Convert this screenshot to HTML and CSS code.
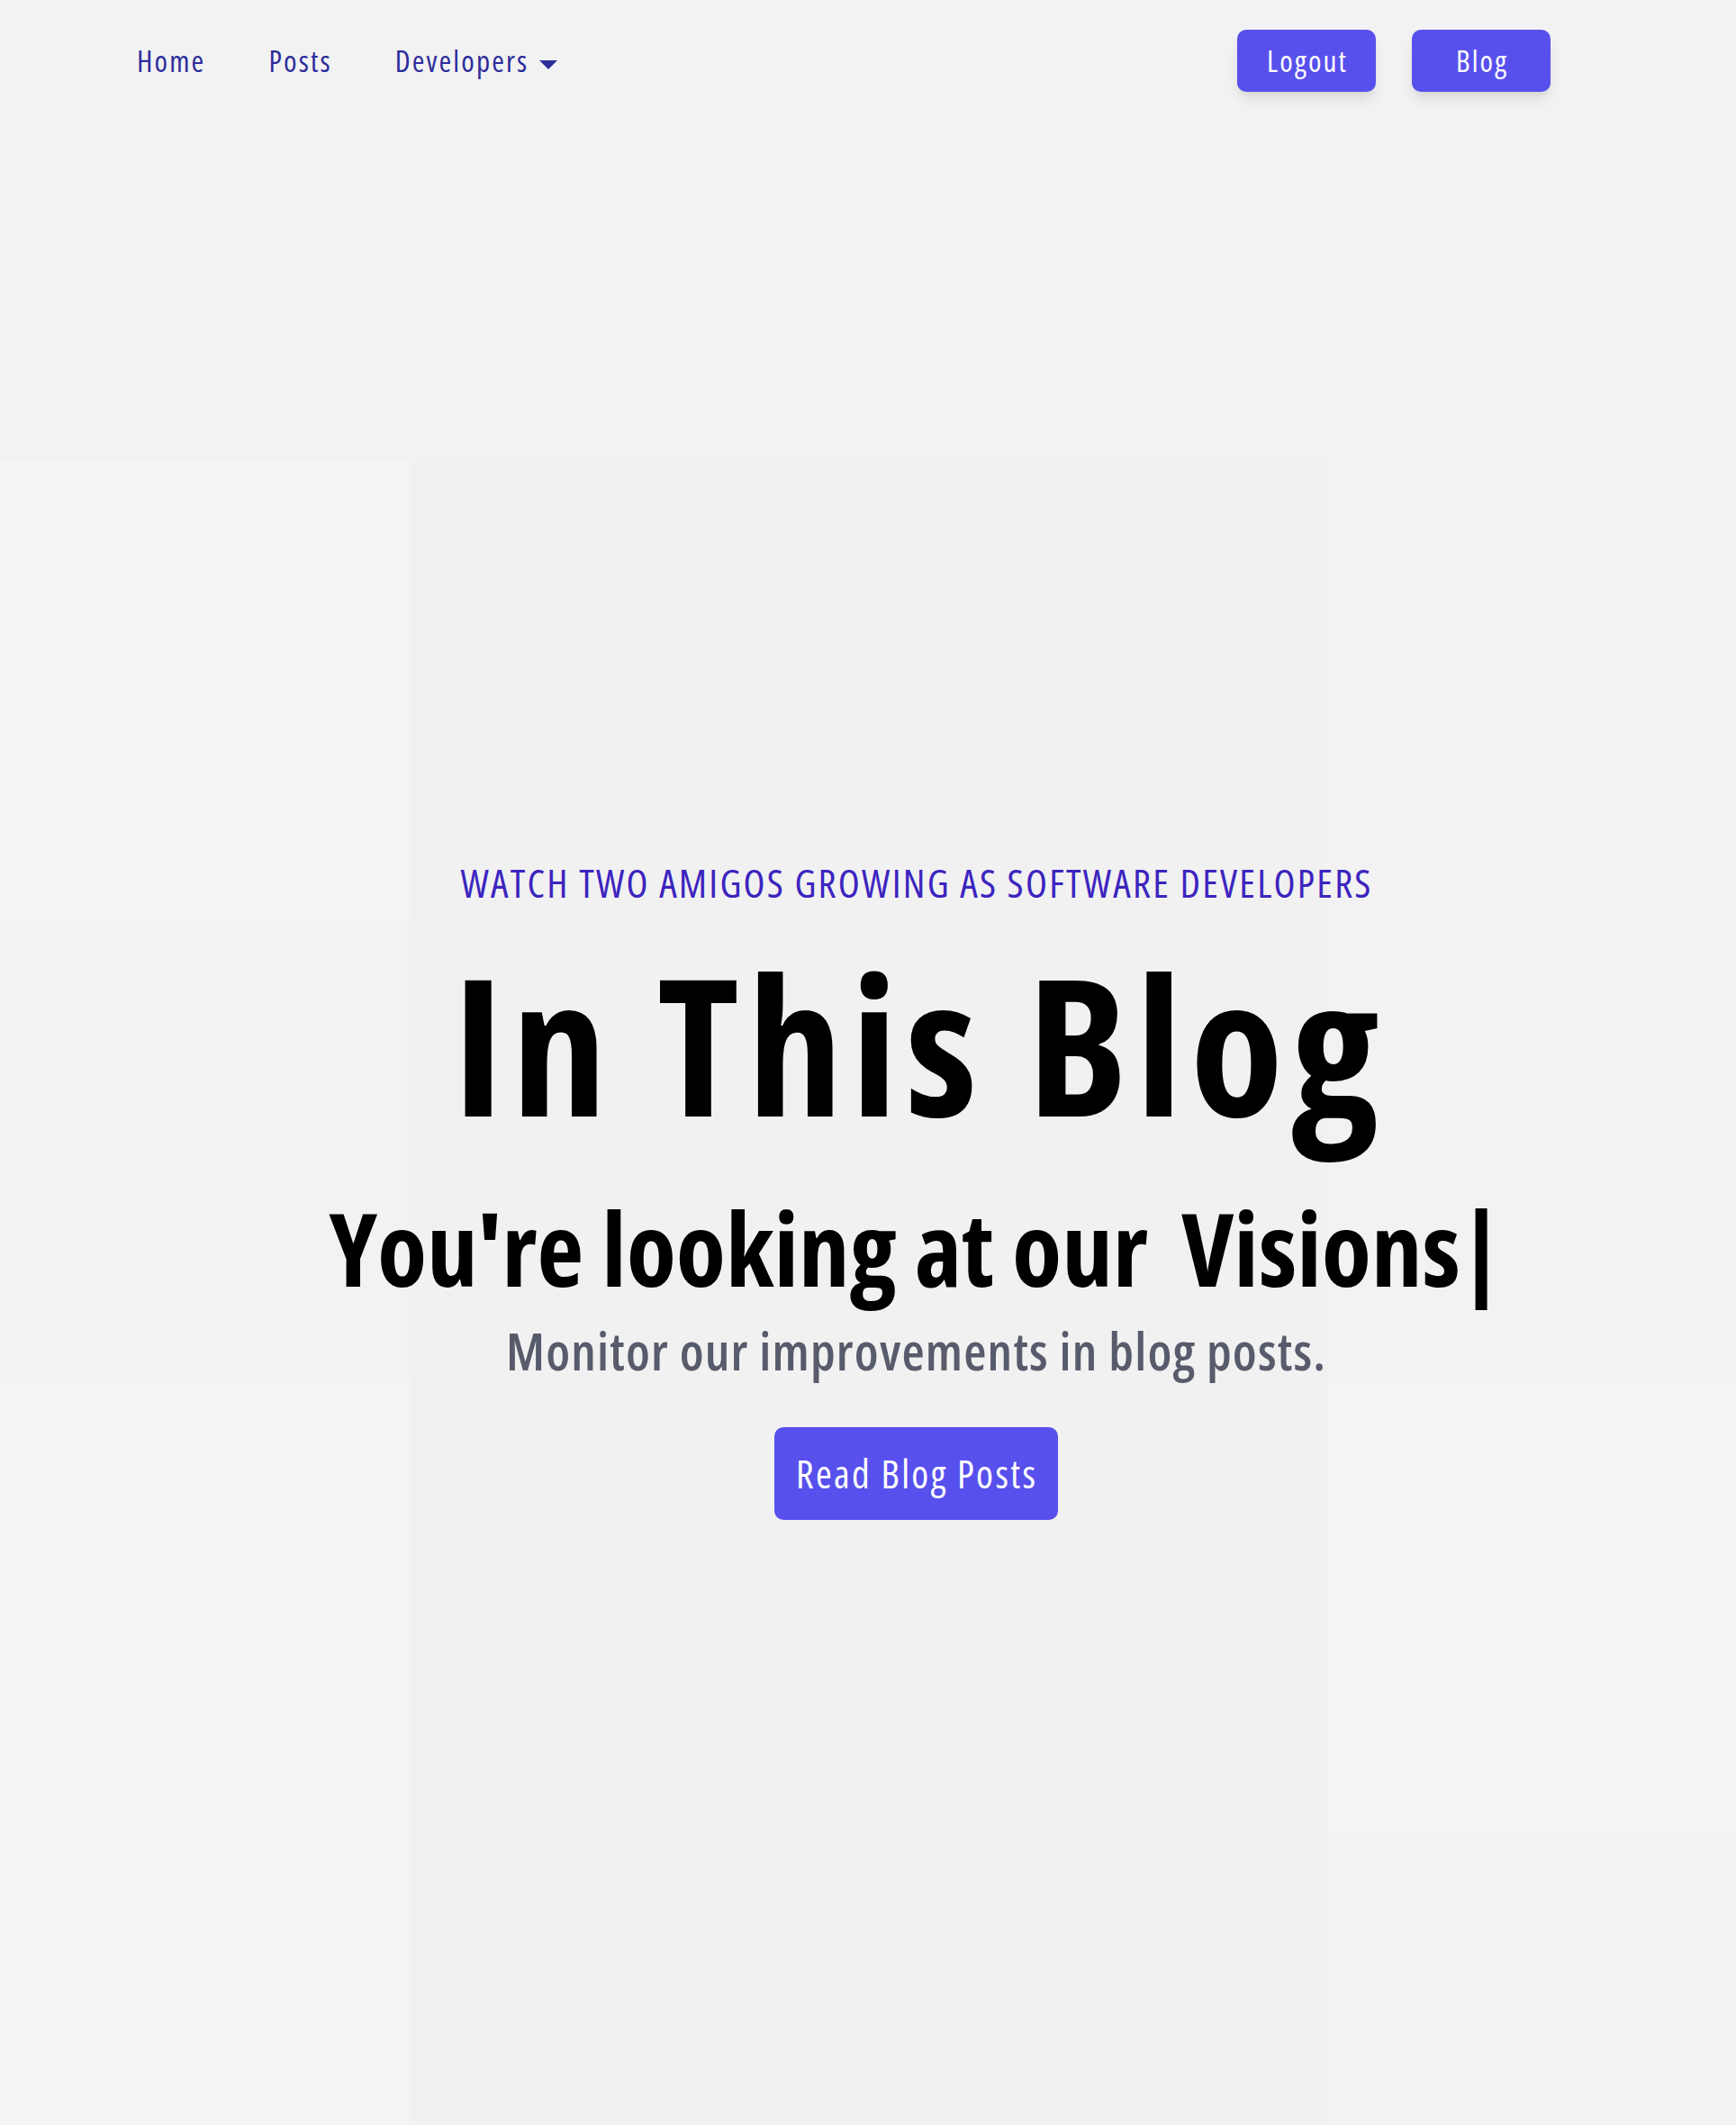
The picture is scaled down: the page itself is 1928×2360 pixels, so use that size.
FILE: index.html
```html
<!DOCTYPE html>
<html lang="en">
<head>
<meta charset="utf-8">
<title>In This Blog</title>
<link rel="stylesheet" href="styles.css">
</head>
<body>
<header class="topbar">
  <nav class="nav-links">
    <a class="nav-link" href="#">Home</a>
    <a class="nav-link" href="#">Posts</a>
    <a class="nav-link nav-dropdown" href="#">Developers
      <svg class="caret" viewBox="0 0 20 10" width="20" height="10" aria-hidden="true"><path d="M0 0H20L10 10Z" fill="currentColor"/></svg>
    </a>
  </nav>
  <div class="nav-actions">
    <a class="btn btn-nav" href="#">Logout</a>
    <a class="btn btn-nav" href="#">Blog</a>
  </div>
</header>
<main class="hero">
  <p class="eyebrow">WATCH TWO AMIGOS GROWING AS SOFTWARE DEVELOPERS</p>
  <h1 class="title">In This Blog</h1>
  <h2 class="subtitle">You're looking at our<span class="typed">Visions</span><span class="cursor">|</span></h2>
  <p class="lead">Monitor our improvements in blog posts.</p>
  <a class="btn btn-cta" href="#">Read Blog Posts</a>
</main>
</body>
</html>
```
FILE: styles.css
```css
* { box-sizing: border-box; }
html, body { margin: 0; padding: 0; }
body {
  min-height: 2360px;
  font-family: "Open Sans", "DejaVu Sans Condensed", sans-serif;
  font-stretch: 75%;
  background:
    linear-gradient(#f4f4f4, #f4f4f4) 0 511px / 455px 510px no-repeat,
    linear-gradient(#f4f4f4, #f4f4f4) 0 1529px / 455px 831px no-repeat,
    linear-gradient(#f4f4f4, #f4f4f4) 1475px 1529px / 453px 512px no-repeat,
    linear-gradient(#f1f1f1, #f1f1f1) 455px 511px / 1020px 1849px no-repeat,
    #f2f2f2;
  color: #000;
}
a { text-decoration: none; }

.topbar {
  display: flex;
  align-items: center;
  justify-content: space-between;
  padding: 33px 206px 0 152px;
}
.nav-links {
  display: flex;
  align-items: center;
  gap: 70px;
}
.nav-link {
  font-size: 33px;
  font-weight: 500;
  letter-spacing: 0.065em;
  line-height: 1;
  color: #2d2c9b;
  display: flex;
  align-items: center;
}
.caret {
  margin-left: 12px;
  margin-top: 8px;
}
.nav-actions {
  display: flex;
  gap: 40px;
}
.btn {
  display: inline-block;
  background: #5850ec;
  color: #fff;
  border-radius: 10px;
  line-height: 1;
  text-align: center;
  white-space: nowrap;
  font-weight: 500;
}
.btn-nav {
  width: 154px;
  height: 69px;
  padding: 18px 0 18px 0.065em;
  font-size: 33px;
  letter-spacing: 0.065em;
  box-shadow: 0 10px 15px -3px rgba(0,0,0,0.1), 0 4px 6px -2px rgba(0,0,0,0.05);
}

.hero {
  display: flex;
  flex-direction: column;
  align-items: center;
  padding: 856px 0 0 106px;
  text-align: center;
}
.eyebrow {
  margin: 0;
  padding-left: 0.051em;
  font-size: 44px;
  font-weight: 500;
  letter-spacing: 0.051em;
  line-height: 1;
  color: #3c24bf;
}
.title {
  margin: 50px 0 0;
  padding-left: 0.042em;
  font-size: 212px;
  font-weight: 700;
  letter-spacing: 0.042em;
  line-height: 1;
}
.subtitle {
  margin: 65px 0 0;
  font-size: 113px;
  font-weight: 700;
  line-height: 1;
}
.typed { margin-left: 0.33em; }
.lead {
  margin: 29px 0 0;
  padding-left: 0.02em;
  font-size: 58px;
  font-weight: 600;
  letter-spacing: 0.02em;
  line-height: 1;
  color: #585b6b;
}
.btn-cta {
  margin-top: 56px;
  font-size: 43px;
  letter-spacing: 0.055em;
  padding: 30px 0 30px 0.055em;
  height: 103px;
  width: 315px;
}
```
